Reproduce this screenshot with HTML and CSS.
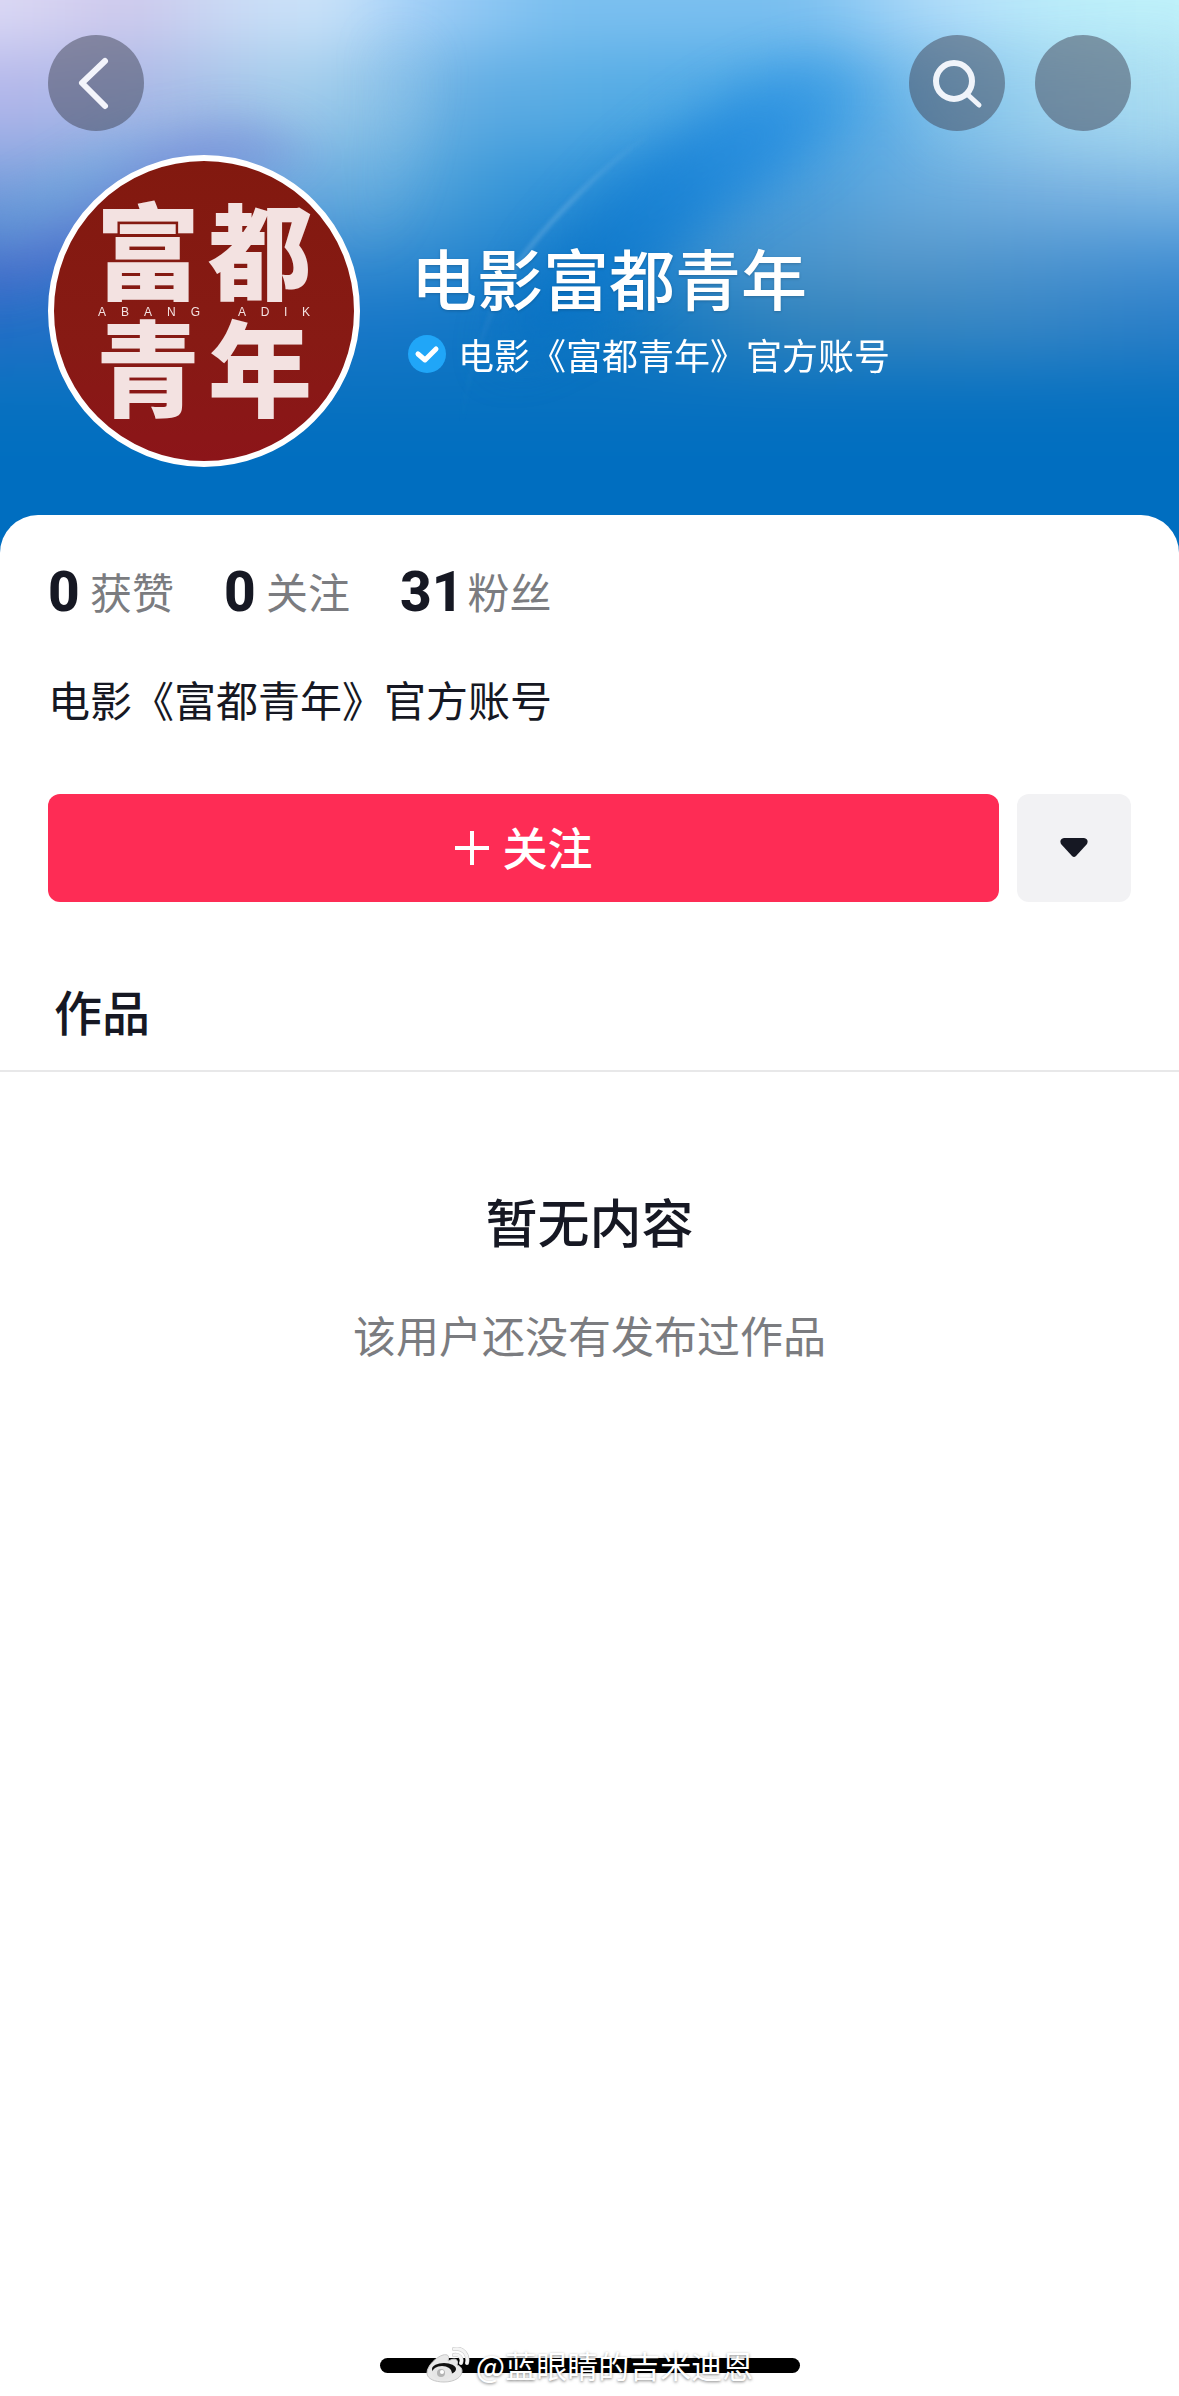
FILE: index.html
```
<!DOCTYPE html>
<html lang="zh-CN">
<head>
    <meta charset="UTF-8">
    <meta name="viewport" content="width=device-width, initial-scale=1.0">
    <title>电影富都青年</title>
    <link rel="stylesheet" href="styles.css">
</head>
<body>
    <header class="hero">
        <svg class="hero-bg" viewBox="0 0 1179 553" preserveAspectRatio="none" aria-hidden="true">
            <defs>
                <filter id="soft" x="-20%" y="-20%" width="140%" height="140%" color-interpolation-filters="sRGB"><feGaussianBlur stdDeviation="32"/></filter>
                <filter id="streak" x="-30%" y="-40%" width="160%" height="180%" color-interpolation-filters="sRGB"><feGaussianBlur stdDeviation="24"/></filter>
                <filter id="fine" x="-30%" y="-30%" width="160%" height="160%" color-interpolation-filters="sRGB"><feGaussianBlur stdDeviation="2"/></filter>
                <linearGradient id="row1" gradientUnits="userSpaceOnUse" x1="0" y1="0" x2="1179" y2="0">
                    <stop offset="0" stop-color="#dcdaf5"/>
                    <stop offset=".11" stop-color="#cfc9ec"/>
                    <stop offset=".2" stop-color="#cbdcf6"/>
                    <stop offset=".28" stop-color="#cce4fa"/>
                    <stop offset=".35" stop-color="#a4d0f8"/>
                    <stop offset=".47" stop-color="#7cc0f0"/>
                    <stop offset=".68" stop-color="#7cc0f0"/>
                    <stop offset=".8" stop-color="#b4defa"/>
                    <stop offset=".9" stop-color="#bceefa"/>
                    <stop offset="1" stop-color="#c0f2fa"/>
                </linearGradient>
                <linearGradient id="row2" gradientUnits="userSpaceOnUse" x1="0" y1="0" x2="1179" y2="0">
                    <stop offset="0" stop-color="#b2b6ea"/>
                    <stop offset=".12" stop-color="#a9b8e6"/>
                    <stop offset=".25" stop-color="#a2cdeb"/>
                    <stop offset=".32" stop-color="#90c4e8"/>
                    <stop offset=".39" stop-color="#62ace2"/>
                    <stop offset=".5" stop-color="#56ace4"/>
                    <stop offset=".7" stop-color="#48a6e6"/>
                    <stop offset=".78" stop-color="#6cb4e8"/>
                    <stop offset=".9" stop-color="#a0d4f0"/>
                    <stop offset="1" stop-color="#acdef2"/>
                </linearGradient>
                <linearGradient id="row3" gradientUnits="userSpaceOnUse" x1="0" y1="0" x2="1179" y2="0">
                    <stop offset="0" stop-color="#7fa2de"/>
                    <stop offset=".3" stop-color="#6cb0e0"/>
                    <stop offset=".42" stop-color="#3a98d8"/>
                    <stop offset=".55" stop-color="#2a90da"/>
                    <stop offset=".68" stop-color="#4a9edc"/>
                    <stop offset=".78" stop-color="#6aaee0"/>
                    <stop offset=".88" stop-color="#7cb4e2"/>
                    <stop offset="1" stop-color="#84bce6"/>
                </linearGradient>
                <linearGradient id="row4" gradientUnits="userSpaceOnUse" x1="0" y1="0" x2="1179" y2="0">
                    <stop offset="0" stop-color="#4674cc"/>
                    <stop offset=".3" stop-color="#3c90d2"/>
                    <stop offset=".5" stop-color="#1880ce"/>
                    <stop offset=".62" stop-color="#4494d0"/>
                    <stop offset=".76" stop-color="#5a9acc"/>
                    <stop offset="1" stop-color="#4a94d6"/>
                </linearGradient>
                <linearGradient id="row5" gradientUnits="userSpaceOnUse" x1="0" y1="0" x2="1179" y2="0">
                    <stop offset="0" stop-color="#246ec6"/>
                    <stop offset=".35" stop-color="#1678c8"/>
                    <stop offset=".5" stop-color="#0a74c2"/>
                    <stop offset=".68" stop-color="#3484bc"/>
                    <stop offset=".85" stop-color="#3886c4"/>
                    <stop offset="1" stop-color="#2a7ec8"/>
                </linearGradient>
                <linearGradient id="arc" gradientUnits="userSpaceOnUse" x1="0" y1="130" x2="0" y2="430">
                    <stop offset="0" stop-color="#a8d0ee" stop-opacity="0"/>
                    <stop offset=".25" stop-color="#a8d0ee" stop-opacity=".3"/>
                    <stop offset=".4" stop-color="#a8d0ee" stop-opacity=".3"/>
                    <stop offset=".6" stop-color="#a8d0ee" stop-opacity=".08"/>
                    <stop offset="1" stop-color="#a8d0ee" stop-opacity="0"/>
                </linearGradient>
                <linearGradient id="wave" gradientUnits="userSpaceOnUse" x1="860" y1="50" x2="560" y2="330">
                    <stop offset="0" stop-color="#1e88de" stop-opacity="0"/>
                    <stop offset=".3" stop-color="#1e88de" stop-opacity=".7"/>
                    <stop offset="1" stop-color="#0872c4" stop-opacity=".8"/>
                </linearGradient>
            </defs>
            <rect width="1179" height="553" fill="#006ec0"/>
            <g filter="url(#soft)">
                <rect x="-100" y="-100" width="1379" height="150" fill="url(#row1)"/>
                <rect x="-100" y="50" width="1379" height="95" fill="url(#row2)"/>
                <rect x="-100" y="145" width="1379" height="75" fill="url(#row3)"/>
                <rect x="-100" y="220" width="1379" height="65" fill="url(#row4)"/>
                <rect x="-100" y="285" width="1379" height="75" fill="url(#row5)"/>
                <rect x="-100" y="360" width="1379" height="60" fill="#0a72c0"/>
                <rect x="-100" y="420" width="1379" height="260" fill="#006ec0"/>
            </g>
            <g filter="url(#streak)">
                <path d="M-20 265 C70 235 120 150 200 130 S290 160 330 150 C270 175 200 180 140 210 S40 290 -20 290Z" fill="#6a68cc" opacity=".4"/>
                <path d="M-20 225 C60 200 110 150 170 130 C120 160 90 215 -20 250Z" fill="#6db4dc" opacity=".6"/>
                <path d="M880 40 C800 50 690 110 610 190 S520 310 500 360 C600 330 670 250 730 205 S860 140 880 40Z" fill="url(#wave)"/>
                <path d="M385 40 C400 120 390 190 360 250 C400 200 410 120 420 60Z" fill="#8cc4ec" opacity=".4"/>
                <path d="M890 60 L1179 40 L1179 160 L930 150Z" fill="#a6dcf2" opacity=".2"/>
            </g>
            <path d="M647 136 C620 155 610 165 594 179 C570 202 545 228 526 252 C505 282 472 340 462 421" fill="none" stroke="url(#arc)" stroke-width="4" filter="url(#fine)"/>
        </svg>

        <nav class="top-bar">
            <button class="round-btn" type="button" aria-label="返回">
                <svg viewBox="0 0 96 96"><path d="M57 26 34 48 57 71" fill="none" stroke="#f3f4fb" stroke-width="6" stroke-linecap="round" stroke-linejoin="round"/></svg>
            </button>
            <div class="top-actions">
                <button class="round-btn" type="button" aria-label="搜索">
                    <svg viewBox="0 0 96 96"><circle cx="45" cy="46" r="18" fill="none" stroke="#f0f4fa" stroke-width="6"/><path d="M58 59 70 70" fill="none" stroke="#f0f4fa" stroke-width="5" stroke-linecap="round"/></svg>
                </button>
                <button class="round-btn" type="button" aria-label="更多"></button>
            </div>
        </nav>

        <div class="profile">
            <div class="avatar">
                <div class="avatar-row"><span>富</span><span>都</span></div>
                <div class="avatar-latin">
                    <div class="abang"><span>A</span><span>B</span><span>A</span><span>N</span><span>G</span></div>
                    <div class="adik"><span>A</span><span>D</span><span>I</span><span>K</span></div>
                </div>
                <div class="avatar-row"><span>青</span><span>年</span></div>
            </div>
            <div class="profile-info">
                <h1>电影富都青年</h1>
                <p class="verified">
                    <svg viewBox="0 0 38 38" aria-hidden="true"><circle cx="19" cy="19" r="19" fill="#20a6f8"/><path d="M10 19 17 25 28 14" fill="none" stroke="#fff" stroke-width="5" stroke-linecap="round" stroke-linejoin="round"/></svg>
                    <span>电影《富都青年》官方账号</span>
                </p>
            </div>
        </div>
    </header>

    <main class="sheet">
        <div class="stats">
            <div class="stat"><strong>0</strong><span>获赞</span></div>
            <div class="stat"><strong>0</strong><span>关注</span></div>
            <div class="stat"><strong>31</strong><span>粉丝</span></div>
        </div>
        <p class="bio">电影《富都青年》官方账号</p>
        <div class="actions">
            <button class="follow-btn" type="button">
                <svg viewBox="0 0 36 36" aria-hidden="true"><path d="M18 1V35M1 18H35" stroke="#fff" stroke-width="4"/></svg>
                <span>关注</span>
            </button>
            <button class="more-btn" type="button" aria-label="展开">
                <svg viewBox="0 0 28 20"><path d="M4 0H24Q29 1 27 6L16 18Q14 20 12 18L1 6Q-1 1 4 0Z" fill="#161823"/></svg>
            </button>
        </div>
        <h2 class="tab">作品</h2>
        <section class="empty">
            <h3>暂无内容</h3>
            <p>该用户还没有发布过作品</p>
        </section>
    </main>

    <footer class="home-area">
        <div class="home-bar"></div>
        <div class="watermark">
            <svg viewBox="0 0 44 36" aria-hidden="true">
                <path d="M17 8C10 10 1 19 1 26C1 32 9 35 18 35C29 35 36 30 36 24C36 21 34 19 31 18C33 13 30 10 22 14C24 8 21 7 17 8Z" fill="#e9e9e9" stroke="#c8c8c8" stroke-width="1"/>
                <ellipse cx="18" cy="22" rx="12" ry="6" fill="#111"/>
                <ellipse cx="16" cy="26" rx="10" ry="7" fill="#e6e6e6"/>
                <circle cx="15" cy="26" r="4" fill="#b4b4b4"/>
                <circle cx="16" cy="25" r="2" fill="#fff"/>
                <path d="M28 2C37 0 43 8 41 16M28 8C33 7 37 11 35 16" fill="none" stroke="#c4c4c4" stroke-width="4" stroke-linecap="round"/>
                <path d="M28 2C37 0 43 8 41 16M28 8C33 7 37 11 35 16" fill="none" stroke="#f4f4f4" stroke-width="3" stroke-linecap="round"/>
            </svg>
            <span>@蓝眼睛的吉米迪恩</span>
        </div>
    </footer>
</body>
</html>
```
FILE: styles.css
```
* {
    box-sizing: border-box;
}
body {
    margin: 0;
    min-height: 100vh;
    display: flex;
    flex-direction: column;
    background-color: #fff;
    color: #161823;
    font-family: "Noto Sans CJK SC", sans-serif;
}
h1, h2, h3, p {
    margin: 0;
    font-weight: 500;
}
button {
    border: none;
    padding: 0;
    font-family: inherit;
    cursor: pointer;
}
svg {
    display: block;
}

/* header */
.hero {
    position: relative;
    padding: 35px 48px 86px;
    background-color: #006ec0;
    color: #fff;
}
.hero-bg {
    position: absolute;
    top: 0;
    left: 0;
    width: 100%;
    height: 100%;
}
.top-bar,
.profile {
    position: relative;
    display: flex;
}
.top-bar {
    justify-content: space-between;
}
.top-actions {
    display: flex;
    gap: 30px;
}
.round-btn {
    width: 96px;
    height: 96px;
    border-radius: 50%;
    background-color: rgba(64, 68, 85, 0.5);
}
.profile {
    align-items: center;
    gap: 48px;
    margin-top: 24px;
}
.avatar {
    flex: none;
    width: 312px;
    height: 312px;
    padding-top: 42px;
    border: 6px solid #fff;
    border-radius: 50%;
    background: linear-gradient(#82190f, #871a14 60%, #8c1519);
    color: #f3e2e1;
}
.avatar-row {
    display: flex;
    justify-content: center;
    gap: 8px;
    font-size: 104px;
    line-height: 87px;
    font-weight: 900;
}
.avatar-latin {
    display: flex;
    justify-content: space-between;
    width: 212px;
    margin: 0 auto;
    padding-top: 15px;
    font-family: "Liberation Sans", sans-serif;
    font-size: 12px;
    line-height: 15px;
}
.abang,
.adik {
    display: flex;
    justify-content: space-between;
}
.abang {
    width: 102px;
}
.adik {
    width: 72px;
}
.profile-info {
    padding-bottom: 4px;
}
.profile-info h1 {
    padding-left: 3px;
    font-size: 66px;
    line-height: 84px;
    text-shadow: 0 1px 3px rgba(0, 0, 0, 0.2);
}
.verified {
    display: flex;
    align-items: center;
    gap: 12px;
    margin-top: 6px;
    font-size: 36px;
    line-height: 60px;
    font-weight: 400;
}
.verified svg {
    width: 38px;
    height: 38px;
}

/* white sheet */
.sheet {
    position: relative;
    flex: 1;
    margin-top: -38px;
    border-radius: 38px 38px 0 0;
    background-color: #fff;
}
.stats {
    display: flex;
    gap: 50px;
    padding: 42px 48px 0;
}
.stat {
    display: flex;
    align-items: center;
    gap: 4px;
    line-height: 66px;
}
.stat strong {
    min-width: 38px;
    padding-top: 2px;
    font-family: Roboto, sans-serif;
    font-size: 55px;
    font-weight: 800;
}
.stat span {
    color: #7b7c80;
    font-size: 42px;
}
.bio {
    padding: 44px 48px 0;
    font-size: 42px;
    line-height: 60px;
    font-weight: 400;
}
.actions {
    display: flex;
    gap: 18px;
    padding: 65px 48px 0;
}
.follow-btn,
.more-btn {
    display: flex;
    align-items: center;
    justify-content: center;
    height: 108px;
    border-radius: 12px;
}
.follow-btn {
    flex: 1;
    gap: 12px;
    background-color: #fe2c55;
    color: #fff;
    font-size: 45px;
    font-weight: 500;
}
.follow-btn span {
    padding-bottom: 4px;
}
.follow-btn svg {
    width: 36px;
    height: 36px;
}
.more-btn {
    width: 114px;
    background-color: #f2f2f4;
}
.more-btn svg {
    width: 28px;
    height: 20px;
}
.tab {
    padding: 72px 54px 24px;
    border-bottom: 2px solid #e8e8e9;
    font-size: 48px;
    line-height: 72px;
}
.empty {
    padding-top: 111px;
    text-align: center;
}
.empty h3 {
    font-size: 52px;
    line-height: 76px;
}
.empty p {
    margin-top: 45px;
    color: #7b7c80;
    font-size: 43px;
    line-height: 60px;
    font-weight: 400;
}

/* bottom */
.home-area {
    display: grid;
    justify-items: center;
    align-items: center;
    padding-bottom: 8px;
}
.home-bar,
.watermark {
    grid-area: 1 / 1;
}
.home-bar {
    width: 420px;
    height: 15px;
    border-radius: 8px;
    background-color: #000;
}
.watermark {
    position: relative;
    display: flex;
    align-items: center;
    gap: 6px;
    color: #fff;
    font-size: 31px;
    line-height: 46px;
    text-shadow: 0 1px 3px rgba(0, 0, 0, 0.5);
}
.watermark svg {
    width: 44px;
    height: 36px;
}
```
